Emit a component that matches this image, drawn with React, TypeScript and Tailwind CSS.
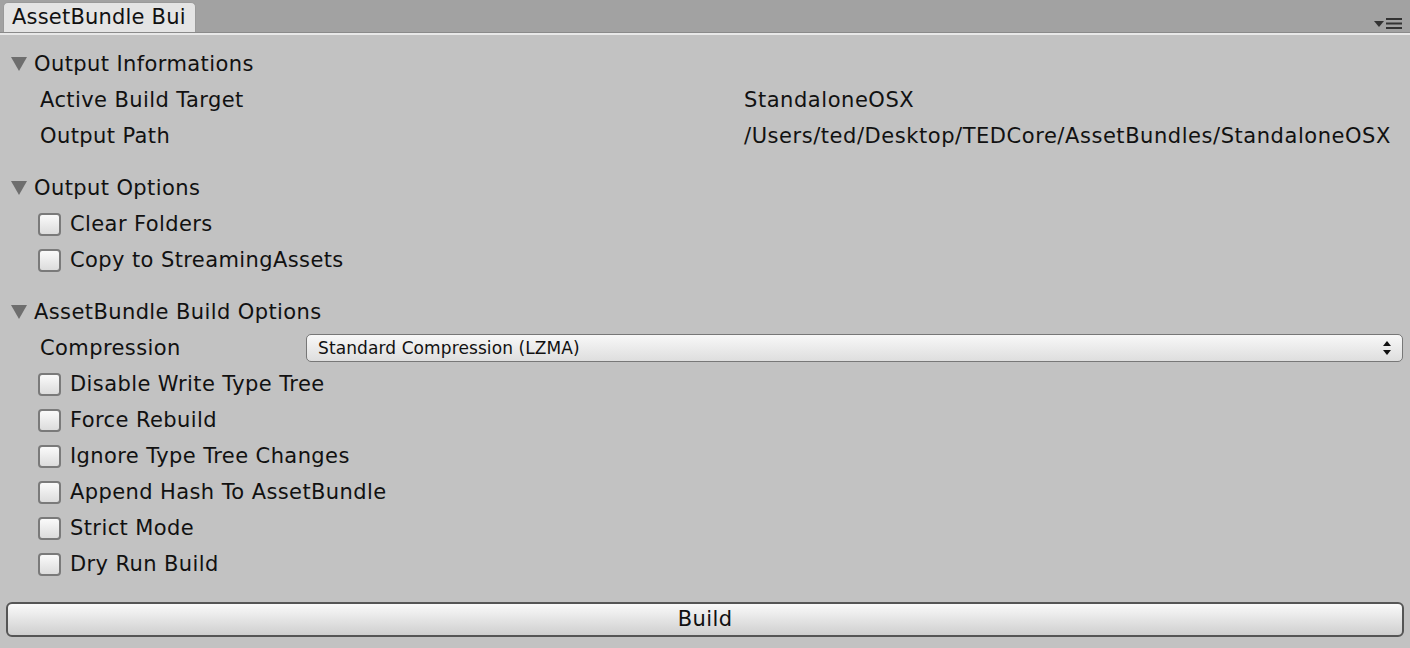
import React from "react";

const font = { fontFamily: '"DejaVu Sans", "Noto Sans", sans-serif' };

function Tri() {
  return (
    <svg width="16" height="14" viewBox="0 0 16 14" className="mr-[7px]">
      <polygon points="0,0 16,0 8,14" fill="#6e6e6e" />
    </svg>
  );
}

function Header({ label }: { label: string }) {
  return (
    <div className="flex items-center h-[36px] pl-[11px]">
      <Tri />
      <span className="pt-[2px]">{label}</span>
    </div>
  );
}

function Check({ label }: { label: string }) {
  return (
    <div className="flex items-center h-[36px] pl-[38px]">
      <div className="w-[23px] h-[23px] rounded-[4px] border-2 border-[#7a7a7a] bg-gradient-to-b from-[#fafafa] to-[#dcdcdc] mr-[9px]" />
      <span className="pt-[2px]">{label}</span>
    </div>
  );
}

function KV({ k, v }: { k: string; v: string }) {
  return (
    <div className="flex items-center h-[36px] pl-[40px]">
      <span className="w-[704px] pt-[2px]">{k}</span>
      <span className="pt-[2px] tracking-[0.55px]">{v}</span>
    </div>
  );
}

export default function App() {
  return (
    <div className="w-[1410px] h-[648px] bg-[#c2c2c2] text-[21px] tracking-[0.4px] text-[#111] overflow-hidden flex flex-col" style={font}>
      <div className="h-[33px] bg-[#a2a2a2] flex items-end justify-between border-b border-[#8a8a8a] relative">
        <div className="ml-[3px] h-[30px] w-[193px] bg-[#e4e4e4] rounded-t-[5px] border border-b-0 border-[#9a9a9a] flex items-center pl-[8px] pt-[1px] tracking-[0.2px]">
          AssetBundle Bui
        </div>
        <div className="flex items-center gap-[2px] mr-[8px] mb-[3px]">
          <svg width="10" height="6" viewBox="0 0 10 6">
            <polygon points="0,0 10,0 5,6" fill="#333" />
          </svg>
          <svg width="16" height="11" viewBox="0 0 16 11">
            <rect x="0" y="0" width="16" height="2" fill="#333" />
            <rect x="0" y="4.5" width="16" height="2" fill="#333" />
            <rect x="0" y="9" width="16" height="2" fill="#333" />
          </svg>
        </div>
      </div>
      <div className="h-[2px] bg-[#e8e8e8]" />
      <div className="pt-[11px] flex flex-col">
        <Header label="Output Informations" />
        <KV k="Active Build Target" v="StandaloneOSX" />
        <KV k="Output Path" v="/Users/ted/Desktop/TEDCore/AssetBundles/StandaloneOSX" />
        <div className="h-[16px]" />
        <Header label="Output Options" />
        <Check label="Clear Folders" />
        <Check label="Copy to StreamingAssets" />
        <div className="h-[16px]" />
        <Header label="AssetBundle Build Options" />
        <div className="flex items-center h-[36px] pl-[40px]">
          <span className="w-[266px] pt-[2px]">Compression</span>
          <div className="flex-1 mr-[7px] h-[28px] rounded-[5px] border border-[#777] bg-gradient-to-b from-[#f8f8f8] to-[#dedede] flex items-center justify-between px-[11px] text-[17px] tracking-[0.1px]">
            <span className="pt-[1px]">Standard Compression (LZMA)</span>
            <svg width="8" height="14" viewBox="0 0 8 14">
              <polygon points="4,0 8,5 0,5" fill="#111" />
              <polygon points="0,9 8,9 4,14" fill="#111" />
            </svg>
          </div>
        </div>
        <Check label="Disable Write Type Tree" />
        <Check label="Force Rebuild" />
        <Check label="Ignore Type Tree Changes" />
        <Check label="Append Hash To AssetBundle" />
        <Check label="Strict Mode" />
        <Check label="Dry Run Build" />
        <div className="px-[6px] mt-[20px]">
          <div className="h-[35px] rounded-[6px] border-2 border-[#555] bg-gradient-to-b from-[#fafafa] to-[#cfcfcf] flex items-center justify-center pt-[1px]">
            Build
          </div>
        </div>
      </div>
    </div>
  );
}
